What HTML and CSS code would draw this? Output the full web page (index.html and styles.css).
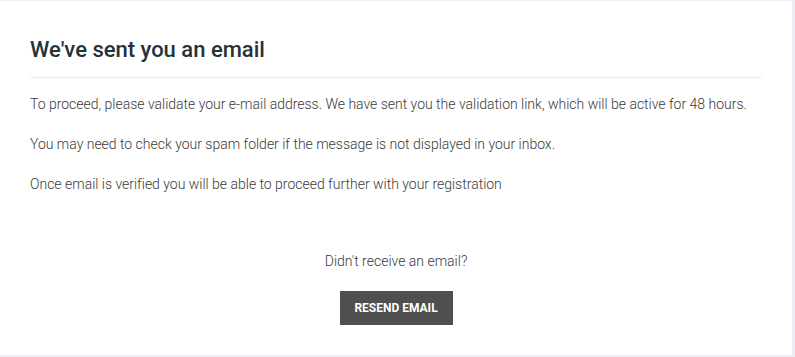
FILE: index.html
```html
<!DOCTYPE html>
<html lang="en">
<head>
<meta charset="utf-8">
<title>We've sent you an email</title>
<link rel="stylesheet" href="styles.css">
</head>
<body>
<main class="card">
  <h1 class="title">We've sent you an email</h1>
  <hr class="divider">
  <p class="text">To proceed, please validate your e-mail address. We have sent you the validation link, which will be active for 48 hours.</p>
  <p class="text">You may need to check your spam folder if the message is not displayed in your inbox.</p>
  <p class="text">Once email is verified you will be able to proceed further with your registration</p>
  <div class="resend">
    <p class="resend-question">Didn't receive an email?</p>
    <button class="btn" type="button">RESEND EMAIL</button>
  </div>
</main>
</body>
</html>
```
FILE: styles.css
```css
html, body {
  margin: 0;
  padding: 0;
  background: #eeeff4;
  font-family: Roboto, "Liberation Sans", sans-serif;
}
body {
  padding-top: 1px;
  height: 357px;
  box-sizing: border-box;
}
.card {
  width: 792px;
  height: 354px;
  box-sizing: border-box;
  background: #ffffff;
  padding: 36px 30px 0;
}
.title {
  margin: 0;
  font-size: 22px;
  font-weight: 500;
  line-height: 26px;
  color: #263238;
}
.divider {
  margin: 14px 0 0;
  border: 0;
  border-top: 1px solid #ebebeb;
  height: 0;
}
.text {
  margin: 0;
  font-size: 14px;
  font-weight: 300;
  line-height: 20px;
  color: #3a3a3a;
  letter-spacing: -0.01px;
}
.divider + .text { margin-top: 16px; }
.text + .text { margin-top: 20px; }
.resend {
  display: flex;
  flex-direction: column;
  align-items: center;
  margin-top: 57px;
}
.resend-question {
  margin: 0;
  font-size: 14px;
  font-weight: 300;
  line-height: 20px;
  color: #3a3a3a;
}
.btn {
  margin-top: 20px;
  width: 113px;
  height: 34px;
  border: 0;
  border-radius: 0;
  background: #4f4f4f;
  color: #ffffff;
  font-family: Roboto, "Liberation Sans", sans-serif;
  font-size: 12px;
  font-weight: 700;
  padding: 0;
}
```
